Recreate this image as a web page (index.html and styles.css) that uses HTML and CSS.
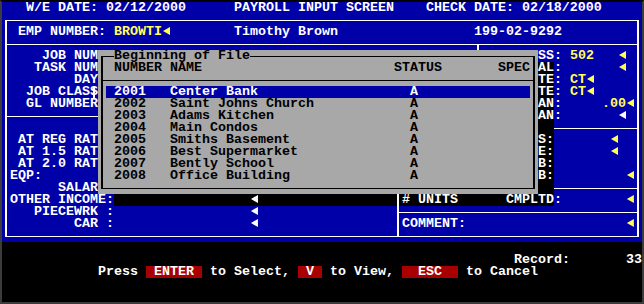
FILE: index.html
```html
<!DOCTYPE html>
<html lang="en">
<head>
  <meta charset="UTF-8" />
  <title>Payroll Input Screen</title>
  <link rel="stylesheet" href="styles.css">
</head>
<body>

  <!-- 80x25 text screen -->
  <div class="screen">

    <!-- form text, one div per screen row -->
    <div class="layer">
      <div class="row">   W/E DATE: 02/12/2000      PAYROLL INPUT SCREEN    CHECK DATE: 02/18/2000</div>
      <div class="row"></div>
      <div class="row">  EMP NUMBER: <span class="y">BROWTI<span class="arw"></span></span>        Timothy Brown                 199-02-9292</div>
      <div class="row"></div>
      <div class="row"><span class="lf">     JOB NUM</span>SS: <span class="y">502</span>   <span class="arw y"></span></div>
      <div class="row"><span class="lf">    TASK NUM</span><span class="sh">AL</span>:       <span class="arw y"></span></div>
      <div class="row"><span class="lf">         DAY</span><span class="sh">TE</span>: <span class="y">CT<span class="arw"></span></span></div>
      <div class="row"><span class="lf">   JOB CLASS</span><span class="sh">TE</span>: <span class="y">CT<span class="arw"></span></span></div>
      <div class="row"><span class="lf">   GL NUMBER</span><span class="sh">AN</span>:     <span class="y">.00<span class="arw"></span></span></div>
      <div class="row"><span class="lf"></span><span class="sh">AN</span>:       <span class="arw"></span></div>
      <div class="row"><span class="lf"></span><span class="sh">  </span></div>
      <div class="row"><span class="lf">  AT REG RAT</span><span class="sh">S:</span>       <span class="arw y"></span></div>
      <div class="row"><span class="lf">  AT 1.5 RAT</span><span class="sh">E:</span>       <span class="arw y"></span></div>
      <div class="row"><span class="lf">  AT 2.0 RAT</span><span class="sh">B:</span></div>
      <div class="row"><span class="lf"> EQP:</span><span class="sh">B:</span>         <span class="arw y"></span></div>
      <div class="row"><span class="lf">       SALAR</span><span class="sh">  </span></div>
      <div class="row"> OTHER INCOME:<span class="sh">                 <span class="arw"></span>                  # UNITS      CMPLTD</span>:        <span class="arw y"></span></div>
      <div class="row">    PIECEWRK :                 <span class="arw"></span></div>
      <div class="row">         CAR :                 <span class="arw"></span>                  COMMENT:                    <span class="arw y"></span></div>
      <div class="row"></div>
      <div class="row ft"></div>
      <div class="row ft rec"><span>Record:</span><span>33</span></div>
      <div class="row ft press">Press <span class="key"> ENTER </span> to Select, <span class="key"> V </span> to View, <span class="key">  ESC  </span> to Cancel</div>
      <div class="row ft"></div>
      <div class="row ft"></div>
    </div>

    <!-- box lines -->
    <div class="frame"></div>
    <div class="hl ln-top"></div>
    <div class="hl ln-left"></div>
    <div class="hl ln-rate"></div>
    <div class="hl ln-units"></div>
    <div class="hl ln-comment"></div>
    <div class="vl vl-mid"></div>
    <div class="vl vl-units"></div>

    <!-- job lookup popup -->
    <div class="popup">
      <div class="pbox"></div>
      <div class="plist">
        <div class="ptitle"><span>Beginning of File</span></div>
        <div class="item head"><span class="num">NUMBER</span><span class="name">NAME</span><span class="st">STATUS</span><span>SPEC</span></div>
        <div class="psep"></div>
        <div class="item sel"><span class="num">2001</span><span class="name">Center Bank</span><span class="st">A</span></div>
        <div class="item"><span class="num">2002</span><span class="name">Saint Johns Church</span><span class="st">A</span></div>
        <div class="item"><span class="num">2003</span><span class="name">Adams Kitchen</span><span class="st">A</span></div>
        <div class="item"><span class="num">2004</span><span class="name">Main Condos</span><span class="st">A</span></div>
        <div class="item"><span class="num">2005</span><span class="name">Smiths Basement</span><span class="st">A</span></div>
        <div class="item"><span class="num">2006</span><span class="name">Best Supermarket</span><span class="st">A</span></div>
        <div class="item"><span class="num">2007</span><span class="name">Bently School</span><span class="st">A</span></div>
        <div class="item"><span class="num">2008</span><span class="name">Office Building</span><span class="st">A</span></div>
      </div>
    </div>

  </div>

</body>
</html>
```

FILE: styles.css
```css
/* text mode screen: 80 cols x 25 rows, 8x12 cells */
body {
  margin: 0;
  background: #000;
  font: bold 13.333px/12px "Liberation Mono", "DejaVu Sans Mono", monospace;
}
.screen {
  width: 640px; height: 300px;
  border: 2px solid #3c3c3c; border-top-color: #000;
  display: grid;
  grid-template-columns: repeat(80, 8px);
  grid-template-rows: repeat(25, 12px);
  background: #0000a8;
  color: #fff;
}

/* text layer */
.layer { grid-area: 1 / 1 / -1 / -1; }
.row { height: 12px; white-space: pre; }
.ft { background: #000; }
.rec { display: flex; justify-content: space-between; padding-left: 512px; }
.press { padding-left: 96px; }

.lf { display: inline-block; width: 536px; vertical-align: top; }
.sh, .key { display: inline-block; height: 12px; vertical-align: top; }
.sh { background: #000; }
.key { background: #a80000; }
.y { color: #ffff55; }

/* little left-pointing field arrow */
.arw {
  display: inline-block; width: 8px; height: 12px;
  vertical-align: top;
  background: currentColor;
  clip-path: polygon(12.5% 42%, 100% 8%, 100% 75%);
}

/* box lines, drawn through the middle of the cells */
.frame {
  grid-area: 2 / 1 / 21 / -1;
  margin: 6px 3px 5px;
  border: solid #fff; border-width: 1px 2px;
}
.hl { align-self: start; margin-top: 6px; border-top: 1px solid #fff; }
.vl { justify-self: start; margin: 6px 0 5px 3px; border-left: 2px solid #fff; }
.ln-top     { grid-area: 4 / 1 / 5 / -1;   margin-left: 3px; margin-right: 3px; }
.ln-left    { grid-area: 10 / 1 / 11 / 61; margin-left: 3px; margin-right: 3px; }
.ln-rate    { grid-area: 11 / 70 / 12 / -1; margin-right: 3px; }
.ln-units   { grid-area: 16 / 70 / 17 / -1; margin-right: 3px; }
.ln-comment { grid-area: 18 / 50 / 19 / -1; margin-left: 3px; margin-right: 3px; }
.vl-mid     { grid-area: 4 / 60 / 17 / 61; }
.vl-units   { grid-area: 16 / 50 / 21 / 51; }

/* popup list */
.popup {
  grid-area: 5 / 13 / 17 / 68;
  display: grid;
  grid-template-rows: repeat(12, 12px);
  background: #a8a8a8;
  color: #000;
}
.pbox {
  grid-area: 1 / 1 / -1 / -1;
  margin: 6px 3px 5px;
  border: solid #000; border-width: 1px 2px;
}
.plist { grid-area: 1 / 1 / -1 / -1; }
.ptitle { height: 12px; padding-left: 16px; white-space: pre; }
.ptitle span { display: inline-block; height: 12px; vertical-align: top; background: #a8a8a8; }
.psep {
  height: 12px; margin: 0 3px;
  background: linear-gradient(#000, #000) 0 6px / 100% 1px no-repeat;
}
.item {
  display: flex; height: 12px;
  margin: 0 8px; padding-left: 8px;
  position: relative; white-space: pre;
}
.item .num { width: 56px; }
.item .name { width: 224px; }
.item .st { width: 88px; padding-left: 16px; }
.item.head .st { width: 104px; padding-left: 0; }
.item.sel { background: #0000a8; color: #fff; }
.item.sel::before {
  content: ""; position: absolute;
  left: -13px; top: 0; width: 2px; height: 12px;
  background: #fff;
}
```
